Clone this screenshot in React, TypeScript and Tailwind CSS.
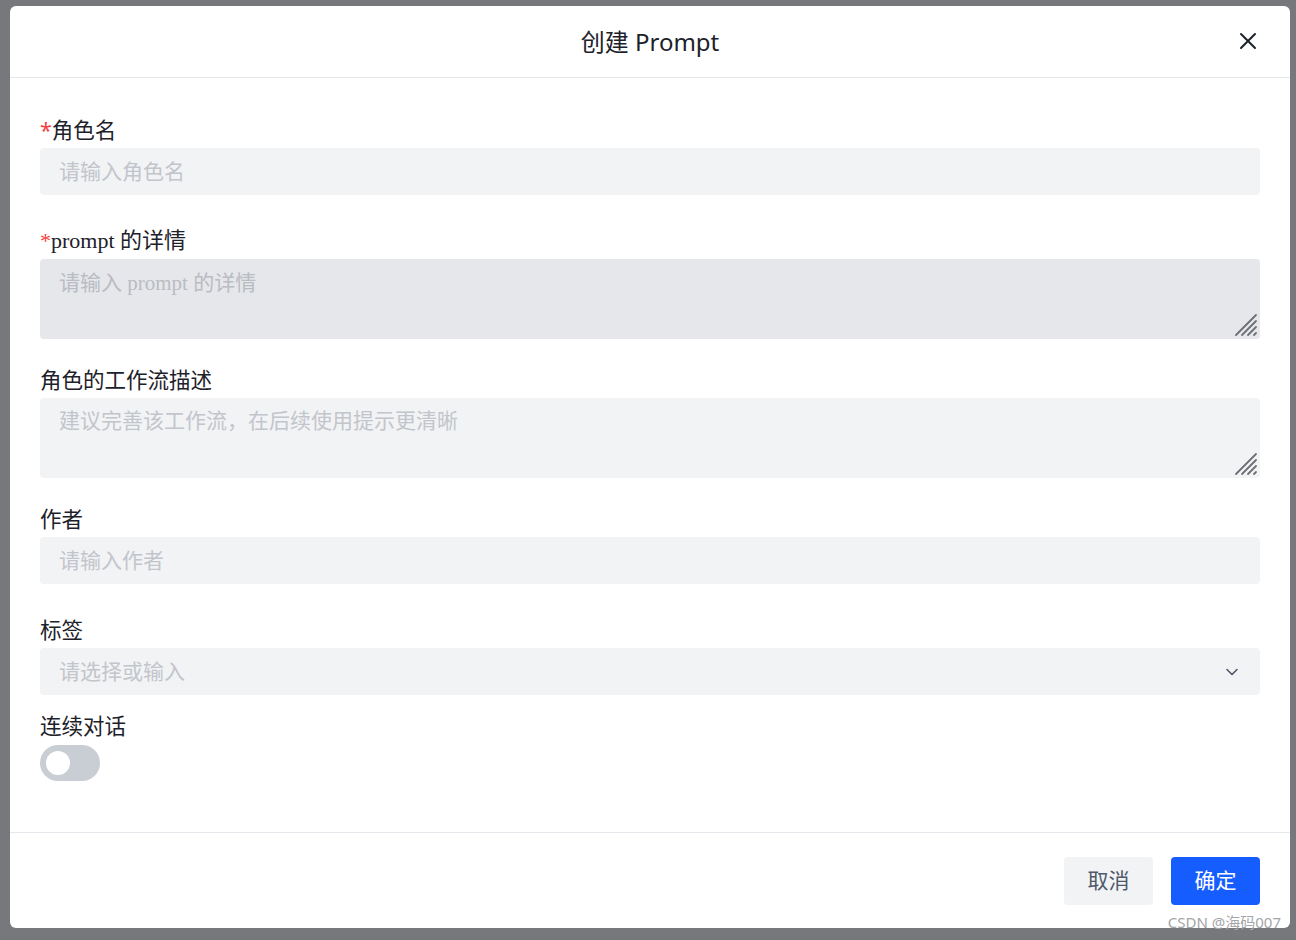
import { useState } from "react";

const sans = "font-['Noto_Sans','Noto_Sans_CJK_SC',sans-serif]";
const serif = "font-['Liberation_Serif','Noto_Sans_CJK_SC',serif]";

function ResizeGrip() {
  return (
    <svg className="absolute bottom-[2px] right-[2px]" width="24" height="24" viewBox="0 0 24 24">
      <g stroke="#6b6e73" strokeWidth="1.8" strokeLinecap="round">
        <line x1="2" y1="22" x2="22" y2="2" />
        <line x1="8" y1="22" x2="22" y2="8" />
        <line x1="14" y1="22" x2="22" y2="14" />
        <line x1="20" y1="22" x2="22" y2="20" />
      </g>
    </svg>
  );
}

function Label({ text, className = "" }: { text: string; className?: string }) {
  return (
    <div className={`h-[30px] leading-[30px] text-[21.5px] text-[#1d2129] ${className}`}>
      {text}
    </div>
  );
}

export default function App() {
  const [on, setOn] = useState(false);

  return (
    <div className={`min-h-[940px] w-full bg-[#77787c] pt-[6px] px-[10px] ${sans}`}>
      <div className="relative h-[922px] w-[1280px] rounded-[6px] bg-white flex flex-col">
        {/* Header */}
        <div className="relative flex h-[72px] items-center justify-center border-b border-[#e5e6eb]">
          <span className="text-[24px] text-[#1d2129]">创建 Prompt</span>
          <button className="absolute right-[33px] top-[26px]">
            <svg width="18" height="18" viewBox="0 0 18 18">
              <path d="M2 2L16 16M16 2L2 16" stroke="#1d2129" strokeWidth="2" strokeLinecap="round" />
            </svg>
          </button>
        </div>

        {/* Body */}
        <div className="flex-1 px-[30px] pt-[37px]">
          <div className="h-[30px] leading-[30px] text-[21.5px] text-[#1d2129]">
            <span className="text-[#f53f3f]">*</span>角色名
          </div>
          <div className="mt-[3px] flex h-[47px] items-center rounded-[4px] bg-[#f2f3f5] px-[19px] text-[21px] text-[#c2c5cb]">
            请输入角色名
          </div>

          <div className={`mt-[31px] h-[30px] leading-[30px] text-[22px] text-[#1d2129] ${serif}`}>
            <span className="text-[#f53f3f]">*</span>prompt 的详情
          </div>
          <div className={`relative mt-[3px] h-[80px] rounded-[4px] bg-[#e6e7ea] px-[19px] pt-[9px] text-[21px] leading-[30px] text-[#b9bcc2] ${serif}`}>
            请输入 prompt 的详情
            <ResizeGrip />
          </div>

          <Label text="角色的工作流描述" className="mt-[26px]" />
          <div className="relative mt-[3px] h-[80px] rounded-[4px] bg-[#f2f3f5] px-[19px] pt-[7px] text-[21px] leading-[30px] text-[#c2c5cb]">
            建议完善该工作流，在后续使用提示更清晰
            <ResizeGrip />
          </div>

          <Label text="作者" className="mt-[26px]" />
          <div className="mt-[3px] flex h-[47px] items-center rounded-[4px] bg-[#f2f3f5] px-[19px] text-[21px] text-[#c2c5cb]">
            请输入作者
          </div>

          <Label text="标签" className="mt-[31px]" />
          <div className="mt-[3px] flex h-[47px] items-center justify-between rounded-[4px] bg-[#f2f3f5] pl-[19px] pr-[20px] text-[21px] text-[#c2c5cb]">
            <span>请选择或输入</span>
            <svg width="16" height="16" viewBox="0 0 16 16">
              <path d="M3 5.5L8 10.5L13 5.5" fill="none" stroke="#4e5969" strokeWidth="1.6" strokeLinecap="round" strokeLinejoin="round" />
            </svg>
          </div>

          <Label text="连续对话" className="mt-[16px]" />
          <button
            onClick={() => setOn(!on)}
            className={`mt-[4px] flex h-[36px] w-[60px] items-center rounded-full px-[6px] ${on ? "bg-[#165dff] justify-end" : "bg-[#c9cdd4] justify-start"}`}
          >
            <span className="h-[24px] w-[24px] rounded-full bg-white" />
          </button>
        </div>

        {/* Footer */}
        <div className="flex h-[96px] items-center justify-end gap-[18px] border-t border-[#e5e6eb] px-[30px] pt-[1px]">
          <button className="h-[48px] w-[89px] rounded-[4px] bg-[#f2f3f5] text-[21px] text-[#4e5969]">取消</button>
          <button className="h-[48px] w-[89px] rounded-[4px] bg-[#165dff] text-[21px] text-white">确定</button>
        </div>

        <span className="absolute bottom-[-4px] right-[9px] text-[15px] leading-[20px] text-[#a3a5a9]">CSDN @海码007</span>
      </div>
    </div>
  );
}
